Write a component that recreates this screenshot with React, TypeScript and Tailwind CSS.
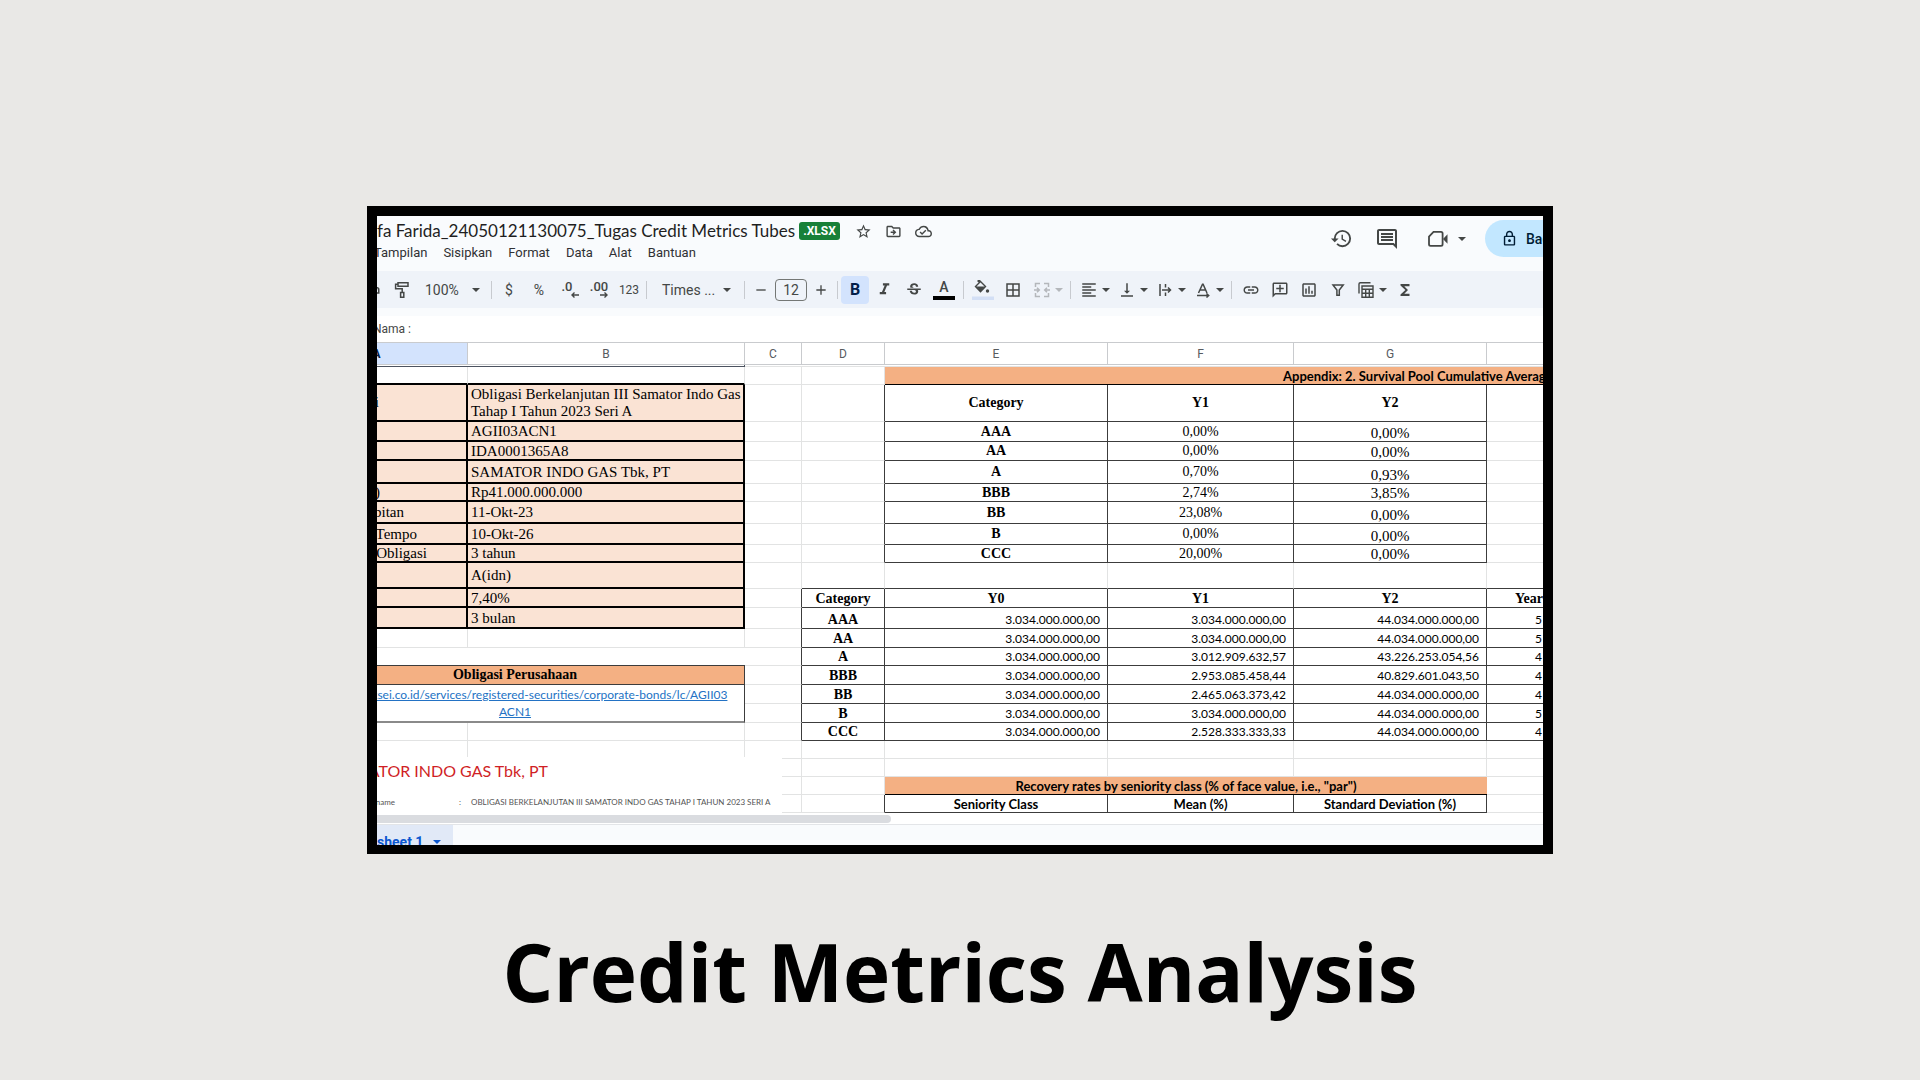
import type { ReactNode } from 'react';
import {
  MdAdd,
  MdBorderAll,
  MdFormatAlignLeft,
  MdFormatItalic,
  MdFunctions,
  MdHistory,
  MdLink,
  MdOutlineAddComment,
  MdOutlineCloudDone,
  MdOutlineComment,
  MdOutlineDriveFileMove,
  MdOutlineInsertChart,
  MdOutlineLock,
  MdOutlinePrint,
  MdRemove,
  MdStarBorder,
  MdStrikethroughS,
  MdVerticalAlignBottom,
} from 'react-icons/md';

const Caret = ({ className = '' }: { className?: string }) => (
  <svg viewBox="0 0 8 4" className={'h-1 w-2 shrink-0 ' + className} fill="currentColor" aria-hidden="true">
    <path d="M0 0h8L4 4z" />
  </svg>
);

const Tool = ({ label, className = 'w-[30px]', children }: { label: string; className?: string; children: ReactNode }) => (
  <button type="button" aria-label={label} className={'flex h-7 shrink-0 items-center justify-center ' + className}>
    {children}
  </button>
);

const MenuTool = ({ label, className = '', children }: { label: string; className?: string; children: ReactNode }) => (
  <button type="button" aria-label={label} className={'flex h-7 w-[38px] shrink-0 items-center gap-1 pl-[5px] ' + className}>
    {children}
    <Caret />
  </button>
);

const Divider = ({ wide = false }: { wide?: boolean }) => (
  <span className={wide ? 'mx-1 h-[18px] w-px shrink-0 bg-[#c7cacf]' : 'mx-0.5 h-[18px] w-px shrink-0 bg-[#c7cacf]'} />
);

const stroke = { fill: 'none', stroke: 'currentColor', strokeWidth: 1.5 } as const;

const PaintIcon = () => (
  <svg viewBox="0 0 18 18" className="size-[18px]" {...stroke}>
    <path d="M5 1.8h10v3.4H5zM5 3.2H2.6v4.6h6.6v3.4M7.6 11.4h3.2v4.8H7.6z" />
  </svg>
);

const DecimalIcon = ({ digits, right = false }: { digits: string; right?: boolean }) => (
  <span className={right ? 'flex flex-col items-end' : 'flex flex-col items-end pr-1'}>
    <span className="text-[13px] leading-[10px] font-medium">{digits}</span>
    <svg viewBox="0 0 8 6" className={right ? 'h-1.5 w-2' : '-mr-1.5 h-1.5 w-2'} fill="none" stroke="currentColor" strokeWidth="1.4">
      {right ? <path d="M0 3h7M4.500.5 7 3 4.500 5.500" /> : <path d="M8 3H1M3.500.5 1 3l2.500 2.500" />}
    </svg>
  </span>
);

const FillIcon = () => (
  <svg viewBox="0 0 22 20" className="h-5 w-[22px]">
    <path d="M7 0l6.500 6.500-5 5.200-5-5.200L7.500 2.600 6 1z" fill="none" stroke="currentColor" strokeWidth="1.400" />
    <path d="M4 6.500h9l-4.500 5z" fill="currentColor" />
    <circle cx="15.500" cy="11" r="1.700" fill="currentColor" />
    <path d="M0 16.500h22v3.500H0z" fill="#d3dff5" />
  </svg>
);

const MergeIcon = () => (
  <svg viewBox="0 0 18 18" className="size-[18px]" fill="none" stroke="currentColor" strokeWidth="1.500">
    <path d="M7 2.500H2.500V6M2.500 12v3.500H7M11 2.500h4.500V6M15.500 12v3.500H11M1 9h5M4 6.800 6.300 9 4 11.200M17 9h-5M14 6.800 11.700 9l2.300 2.200" />
  </svg>
);

const WrapIcon = () => (
  <svg viewBox="0 0 18 18" className="size-[18px]" {...stroke}>
    <path d="M4 3v12M9.500 3v3.500M9.500 11.500V15M6 9h8.500M12 6.500 14.500 9 12 11.500" />
  </svg>
);

const RotateIcon = () => (
  <svg viewBox="0 0 18 18" className="size-[18px]" {...stroke}>
    <path d="M4.500 12 8.500 3.300h.6L13 12M6 9h5.600M3 14.500h11.500M12.500 12.500l2.200 2-2.200 2" />
  </svg>
);

const FilterIcon = () => (
  <svg viewBox="0 0 18 18" className="size-[18px]" {...stroke}>
    <path d="M4 4h10.200L10.300 9v5.300H7.900V9z" />
  </svg>
);

const TableViewsIcon = () => (
  <svg viewBox="0 0 18 18" className="size-[18px]" fill="none" stroke="currentColor" strokeWidth="1.400">
    <path d="M2 12.500V3q0-1.300 1.300-1.300H13.500M5 5h11v11.300H5zM5 8.300h11M5 12.200h11M8.700 8.300v8M12.300 8.300v8" />
  </svg>
);

const VideoIcon = () => (
  <svg viewBox="0 0 20 18" className="h-[18px] w-5" fill="none" stroke="currentColor" strokeWidth="1.800">
    <path d="M5.500 1.900H13q1.600 0 1.600 1.600v10.800q0 1.600-1.600 1.600H2.600q-1.600 0-1.600-1.600V6.500z" />
    <path d="M15 9l4.500-4.800v9.600z" fill="currentColor" stroke="none" />
  </svg>
);

const grid = 'border-r border-b border-r-[#e2e3e3] border-b-[#e2e3e3] ';
const bond = 'border-r-2 border-b-2 border-black bg-[#fae3d4] align-middle whitespace-nowrap ';
const box = 'border-r border-b border-[#3c3c3c] ';
const num = 'pr-[7px] text-right align-bottom font-[Lato,sans-serif] text-xs leading-4 ';
const serifB = 'text-center text-sm leading-4 font-bold ';

type Row = {
  h: string;
  left: [string, string];
  pool: [string, string, string];
};

const bondRows: Row[] = [
  { h: 'h-5', left: ['', 'AGII03ACN1'], pool: ['AAA', '0,00%', '0,00%'] },
  { h: 'h-[19px]', left: ['', 'IDA0001365A8'], pool: ['AA', '0,00%', '0,00%'] },
  { h: 'h-[23px]', left: ['', 'SAMATOR INDO GAS Tbk, PT'], pool: ['A', '0,70%', '0,93%'] },
  { h: 'h-[18px]', left: ['Nominal (Rp)', 'Rp41.000.000.000'], pool: ['BBB', '2,74%', '3,85%'] },
  { h: 'h-[22px]', left: ['Tanggal Penerbitan', '11-Okt-23'], pool: ['BB', '23,08%', '0,00%'] },
  { h: 'h-[21px]', left: ['Tanggal Jatuh Tempo', '10-Okt-26'], pool: ['B', '0,00%', '0,00%'] },
  { h: 'h-[18px]', left: ['Jangka Waktu Obligasi', '3 tahun'], pool: ['CCC', '20,00%', '0,00%'] },
];

/* Padding that lines each label's end up inside column A. */
const labelPad: Record<string, string> = {
  'Nominal (Rp)': 'pr-[86px]',
  'Tanggal Penerbitan': 'pr-[62px]',
  'Tanggal Jatuh Tempo': 'pr-[49px]',
  'Jangka Waktu Obligasi': 'pr-[39px]',
};

const V = '3.034.000.000,00';
const W = '44.034.000.000,00';

const ValueCells = ({ v }: { v: [string, string, string, string, string] }) => (
  <>
    <th scope="row" className={box + serifB + 'align-bottom'}>{v[0]}</th>
    <td className={box + num}>{v[1]}</td>
    <td className={box + num}>{v[2]}</td>
    <td className={box + num}>{v[3]}</td>
    <td className="border-b border-[#3c3c3c] pl-12 align-bottom font-[Lato,sans-serif] text-xs leading-4">{v[4]}</td>
  </>
);

const Blank = ({ n }: { n: number }) => (
  <>
    {Array.from({ length: n }, (_, i) => (
      <td key={i} className={grid} />
    ))}
  </>
);

const EdgeC = () => <td className="border-r border-b border-r-[#3c3c3c] border-b-[#e2e3e3]" />;

const headings = ['A', 'B', 'C', 'D', 'E', 'F', 'G', 'H'];

function Sheet() {
  return (
    <table className="-ml-[91px] w-[1390px] table-fixed border-separate border-spacing-0 bg-white font-['Liberation_Serif',serif] text-black">
      <colgroup>
        <col className="w-[182px]" />
        <col className="w-[277px]" />
        <col className="w-[57px]" />
        <col className="w-[83px]" />
        <col className="w-[223px]" />
        <col className="w-[186px]" />
        <col className="w-[193px]" />
        <col />
      </colgroup>
      <thead>
        <tr className="h-[23px]">
          {headings.map((h) => (
            <th
              key={h}
              scope="col"
              className={
                'border-t border-r border-b border-[#c9cbce] font-[Roboto,sans-serif] text-xs leading-4 ' +
                (h === 'A' ? 'bg-[#d3e3fd] font-bold text-[#041e49]' : 'font-normal text-[#575b5f]')
              }
            >
              {h}
            </th>
          ))}
        </tr>
      </thead>
      <tbody>
        <tr className="h-0.5">
          <td colSpan={2} className="border-r border-b border-[#4c5360]" />
          <td colSpan={6} className="border-b border-[#e2e3e3]" />
        </tr>
        <tr className="h-[18px]">
          <td className="border-r border-b-2 border-r-[#e2e3e3] border-b-black" />
          <td className="border-r border-b-2 border-r-[#e2e3e3] border-b-black" />
          <Blank n={2} />
          <td colSpan={4} className="border-b border-black bg-[#f4b083] pl-[398px] align-bottom font-[Lato,sans-serif] text-[13px] leading-4 font-bold whitespace-nowrap">
            Appendix: 2. Survival Pool Cumulative Average
          </td>
        </tr>
        <tr className="h-[37px]">
          <th scope="row" className={bond + 'pr-[87px] text-right text-[15px] font-normal'}>Nama Obligasi</th>
          <td className={bond + 'pl-[3px] text-[15px] leading-[17px]'}>
            Obligasi Berkelanjutan III Samator Indo Gas
            <br />
            Tahap I Tahun 2023 Seri A
          </td>
          <Blank n={1} />
          <EdgeC />
          <th className={box + serifB}>Category</th>
          <th className={box + serifB}>Y1</th>
          <th className={box + serifB}>Y2</th>
          <Blank n={1} />
        </tr>
        {bondRows.map((r) => (
          <tr key={r.left[1]} className={r.h}>
            <th scope="row" className={bond + 'text-right text-[15px] leading-4 font-normal ' + (labelPad[r.left[0]] ?? '')}>
              {r.left[0]}
            </th>
            <td className={bond + 'pl-[3px] text-[15px] leading-4'}>{r.left[1]}</td>
            <Blank n={1} />
            <EdgeC />
            <th scope="row" className={box + serifB}>{r.pool[0]}</th>
            <td className={box + 'text-center text-sm leading-4'}>{r.pool[1]}</td>
            <td className={box + 'text-center align-bottom text-[15px] leading-4'}>{r.pool[2]}</td>
            <Blank n={1} />
          </tr>
        ))}
        <tr className="h-[26px]">
          <td className={bond} />
          <td className={bond + 'pl-[3px] text-[15px] leading-4'}>A(idn)</td>
          <Blank n={1} />
          {[0, 1, 2, 3, 4].map((i) => (
            <td key={i} className="border-r border-b border-r-[#e2e3e3] border-b-[#3c3c3c]" />
          ))}
        </tr>
        <tr className="h-[19px]">
          <td className={bond} />
          <td className={bond + 'pl-[3px] text-[15px] leading-4'}>7,40%</td>
          <EdgeC />
          <th className={box + serifB + 'align-bottom'}>Category</th>
          <th className={box + serifB + 'align-bottom'}>Y0</th>
          <th className={box + serifB + 'align-bottom'}>Y1</th>
          <th className={box + serifB + 'align-bottom'}>Y2</th>
          <th className="border-b border-[#3c3c3c] pl-7 text-left align-bottom text-sm leading-4 font-bold">Year</th>
        </tr>
        <tr className="h-[21px]">
          <td className={bond} />
          <td className={bond + 'pl-[3px] text-[15px] leading-4'}>3 bulan</td>
          <EdgeC />
          <ValueCells v={['AAA', V, V, W, '5']} />
        </tr>
        <tr className="h-[19px]">
          <Blank n={2} />
          <EdgeC />
          <ValueCells v={['AA', V, V, W, '5']} />
        </tr>
        <tr className="h-[18px]">
          <td colSpan={2} className="border-b border-[#3c3c3c]" />
          <EdgeC />
          <ValueCells v={['A', V, '3.012.909.632,57', '43.226.253.054,56', '4']} />
        </tr>
        <tr className="h-[19px]">
          <th colSpan={2} className={box + serifB + 'bg-[#f4b083]'}>Obligasi Perusahaan</th>
          <EdgeC />
          <ValueCells v={['BBB', V, '2.953.085.458,44', '40.829.601.043,50', '4']} />
        </tr>
        <tr className="h-[19px]">
          <td
            colSpan={2}
            rowSpan={2}
            className="border-r border-b-2 border-r-[#3c3c3c] border-b-[#8a8a8a] text-center font-[Lato,sans-serif] text-xs leading-[17px] whitespace-nowrap"
          >
            <a href="#bond" className="text-[#2372c4] underline">
              https://www.ksei.co.id/services/registered-securities/corporate-bonds/lc/AGII03
              <br />
              ACN1
            </a>
          </td>
          <EdgeC />
          <ValueCells v={['BB', V, '2.465.063.373,42', W, '4']} />
        </tr>
        <tr className="h-[19px]">
          <EdgeC />
          <ValueCells v={['B', V, V, W, '5']} />
        </tr>
        <tr className="h-[18px]">
          <Blank n={2} />
          <EdgeC />
          <ValueCells v={['CCC', V, '2.528.333.333,33', W, '4']} />
        </tr>
        <tr className="h-[18px]">
          <td className={grid + 'relative'}>
            <div className="absolute top-4 left-0 z-10 h-[57px] w-[496px] bg-white font-[Lato,sans-serif]">
              <p className="w-[262px] pt-0.5 text-right text-base leading-6 whitespace-nowrap text-[#d01f26]">SAMATOR INDO GAS Tbk, PT</p>
              <dl className="flex pt-[11px] text-[8px] leading-4 whitespace-nowrap text-[#555]">
                <dt className="w-[109px] shrink-0 text-right">Security name</dt>
                <dd className="flex">
                  <span className="w-[76px] shrink-0 pl-16">:</span>
                  OBLIGASI BERKELANJUTAN III SAMATOR INDO GAS TAHAP I TAHUN 2023 SERI A
                </dd>
              </dl>
            </div>
          </td>
          <Blank n={7} />
        </tr>
        <tr className="h-[18px]">
          <Blank n={8} />
        </tr>
        <tr className="h-[18px]">
          <Blank n={4} />
          <th colSpan={3} className="border-b border-black bg-[#f4b083] align-bottom font-[Lato,sans-serif] text-[13px] leading-4 font-bold">
            Recovery rates by seniority class (% of face value, i.e., "par")
          </th>
          <Blank n={1} />
        </tr>
        <tr className="h-[18px]">
          <Blank n={3} />
          <EdgeC />
          {['Seniority Class', 'Mean (%)', 'Standard Deviation (%)'].map((t) => (
            <th key={t} className={box + 'align-bottom font-[Lato,sans-serif] text-[13px] leading-4 font-bold'}>{t}</th>
          ))}
          <Blank n={1} />
        </tr>
      </tbody>
    </table>
  );
}

export default function App() {
  return (
    <main className="flex min-h-screen flex-col bg-[#e9e8e6] px-[367px] pt-[206px] font-[Roboto,sans-serif]">
      <section className="overflow-hidden border-[10px] border-b-[9px] border-black bg-white text-[#444746]">
        <header className="flex h-[55px] justify-between overflow-hidden bg-[#f9fbfd]">
          <div className="pt-1">
            <div className="flex h-[22px] items-center whitespace-nowrap">
              <h2 className="font-[Lato,sans-serif] text-[17px] leading-[22px] text-[#1f1f1f]">fa Farida_24050121130075_Tugas Credit Metrics Tubes</h2>
              <span className="ml-1 flex h-[18px] w-[41px] items-center justify-center rounded-[3px] bg-[#188038] text-xs leading-4 font-bold text-white">
                .XLSX
              </span>
              <div className="ml-2 flex">
                <Tool label="Star"><MdStarBorder className="size-[17px]" /></Tool>
                <Tool label="Move"><MdOutlineDriveFileMove className="size-[17px]" /></Tool>
                <Tool label="Saved"><MdOutlineCloudDone className="size-[17px]" /></Tool>
              </div>
            </div>
            <nav className="-ml-[3px] flex gap-4 text-[13px] leading-[22px] text-[#303134]">
              {['Tampilan', 'Sisipkan', 'Format', 'Data', 'Alat', 'Bantuan'].map((m) => (
                <button key={m} type="button">{m}</button>
              ))}
            </nav>
          </div>
          <div className="-mr-20 flex items-start pt-1">
            <button type="button" aria-label="History" className="flex h-[37px] w-[46px] items-center justify-center"><MdHistory className="size-[23px]" /></button>
            <button type="button" aria-label="Comments" className="flex h-[37px] w-[46px] items-center justify-center"><MdOutlineComment className="size-6" /></button>
            <button type="button" aria-label="Meet" className="flex h-[37px] w-[75px] items-center gap-2.5 pl-[18px]">
              <VideoIcon />
              <Caret />
            </button>
            <button type="button" className="flex h-[37px] w-[138px] items-center gap-2 rounded-full bg-[#c2e7ff] pl-4 text-sm font-medium text-[#001d35]">
              <MdOutlineLock className="size-[17px]" />
              Bagikan
            </button>
          </div>
        </header>

        <div className="flex h-[37px] items-center overflow-hidden bg-[#eff3f9] text-sm">
          <Tool label="Print" className="-ml-5 w-[30px]"><MdOutlinePrint className="size-[18px]" /></Tool>
          <Tool label="Paint format"><PaintIcon /></Tool>
          <button type="button" className="flex h-7 w-[72px] shrink-0 items-center justify-between pr-[9px] pl-2">
            100%
            <Caret />
          </button>
          <Divider />
          <Tool label="Currency">$</Tool>
          <Tool label="Percent">%</Tool>
          <Tool label="Fewer decimals"><DecimalIcon digits=".0" /></Tool>
          <Tool label="More decimals"><DecimalIcon digits=".00" right /></Tool>
          <Tool label="Number format" className="w-[30px] text-xs">123</Tool>
          <Divider />
          <button type="button" className="flex h-7 w-[93px] shrink-0 items-center justify-between pr-[11px] pl-[13px]">
            Times ...
            <Caret />
          </button>
          <Divider />
          <Tool label="Smaller" className="w-7"><MdRemove className="size-4" /></Tool>
          <input aria-label="Font size" defaultValue="12" className="h-[22px] w-8 shrink-0 rounded border border-[#747775] text-center text-sm" />
          <Tool label="Larger" className="w-7"><MdAdd className="size-4" /></Tool>
          <Divider />
          <Tool label="Bold" className="mx-px w-7 rounded bg-[#d3e3fd] text-base font-bold text-[#041e49]">B</Tool>
          <Tool label="Italic" className="w-[29px]"><MdFormatItalic className="size-[19px]" /></Tool>
          <Tool label="Strikethrough"><MdStrikethroughS className="size-[18px]" /></Tool>
          <Tool label="Text colour">
            <span className="flex w-[22px] flex-col items-center border-b-4 border-black pb-px text-sm leading-[15px] font-medium">A</span>
          </Tool>
          <Divider wide />
          <Tool label="Fill colour"><FillIcon /></Tool>
          <Tool label="Borders"><MdBorderAll className="size-[18px]" /></Tool>
          <MenuTool label="Merge" className="text-[#b4b7bb]"><MergeIcon /></MenuTool>
          <Divider wide />
          <MenuTool label="Align"><MdFormatAlignLeft className="size-[18px]" /></MenuTool>
          <MenuTool label="Vertical align"><MdVerticalAlignBottom className="size-[18px]" /></MenuTool>
          <MenuTool label="Wrap"><WrapIcon /></MenuTool>
          <MenuTool label="Rotate"><RotateIcon /></MenuTool>
          <Divider wide />
          <Tool label="Link" className="w-[29px]"><MdLink className="size-[18px]" /></Tool>
          <Tool label="Comment" className="w-[29px]"><MdOutlineAddComment className="size-[18px] -scale-x-100" /></Tool>
          <Tool label="Chart" className="w-[29px]"><MdOutlineInsertChart className="size-[18px]" /></Tool>
          <Tool label="Filter" className="w-[29px]"><FilterIcon /></Tool>
          <MenuTool label="Table views"><TableViewsIcon /></MenuTool>
          <Tool label="Functions"><MdFunctions className="size-[18px]" /></Tool>
        </div>

        <div className="h-2 bg-[#f9fbfd]" />
        <div className="-ml-1 flex h-[26px] items-center text-xs">Nama :</div>

        <Sheet />

        <div className="pt-0.5 pb-px">
          <div className="h-2 w-[514px] rounded-r-full bg-[#dadce0]" />
        </div>
        <footer className="flex h-[21px] overflow-hidden border-t border-[#e3e5e8] bg-[#f9fbfd]">
          <button type="button" className="flex h-[34px] w-[76px] shrink-0 items-center gap-2.5 bg-[#e1e9f7] text-sm font-bold whitespace-nowrap text-[#0b57d0]">
            sheet 1
            <Caret />
          </button>
        </footer>
      </section>
      <h1 className="pt-[62px] text-center font-['Open_Sans',sans-serif] text-[80px] leading-[110px] font-bold whitespace-nowrap text-black">
        Credit Metrics Analysis
      </h1>
    </main>
  );
}
